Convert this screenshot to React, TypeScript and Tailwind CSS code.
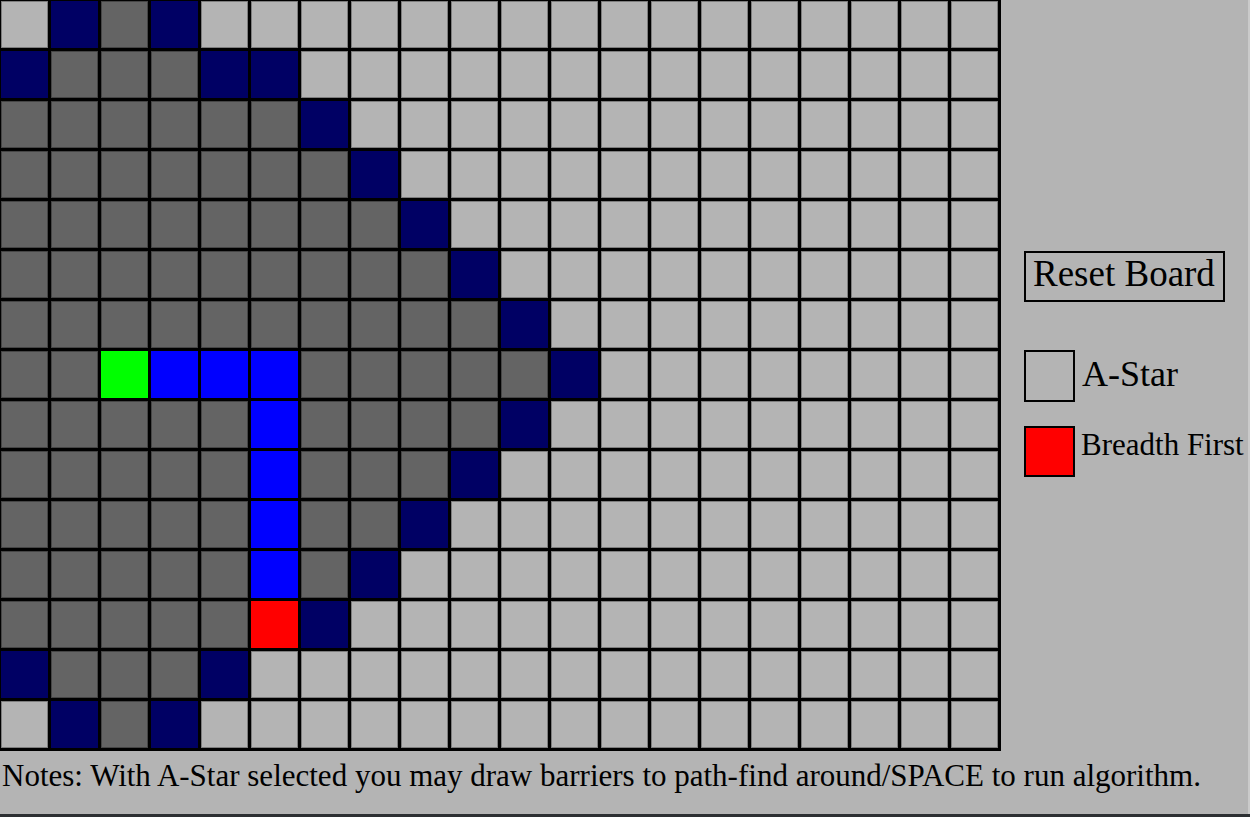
import React from 'react';

// L = unvisited, D = visited, N = frontier, B = path, G = start, R = end
const rows = [
  'LNDNLLLLLLLLLLLLLLLL',
  'NDDDNNLLLLLLLLLLLLLL',
  'DDDDDDNLLLLLLLLLLLLL',
  'DDDDDDDNLLLLLLLLLLLL',
  'DDDDDDDDNLLLLLLLLLLL',
  'DDDDDDDDDNLLLLLLLLLL',
  'DDDDDDDDDDNLLLLLLLLL',
  'DDGBBBDDDDDNLLLLLLLL',
  'DDDDDBDDDDNLLLLLLLLL',
  'DDDDDBDDDNLLLLLLLLLL',
  'DDDDDBDDNLLLLLLLLLLL',
  'DDDDDBDNLLLLLLLLLLLL',
  'DDDDDRNLLLLLLLLLLLLL',
  'NDDDNLLLLLLLLLLLLLLL',
  'LNDNLLLLLLLLLLLLLLLL',
];

const cellClass: Record<string, string> = {
  L: 'bg-[#b4b4b4] border border-black/30',
  D: 'bg-[#646464] border border-black/30',
  N: 'bg-[#000064]',
  B: 'bg-[#0000ff]',
  G: 'bg-[#00ff00]',
  R: 'bg-[#ff0000]',
};

const Board: React.FC = () => (
  <div className="grid grid-cols-[repeat(20,47px)] auto-rows-[47px] gap-[3px] bg-black p-px pr-[3px] pb-[3px] w-[1001px] h-[751px]">
    {rows.flatMap((row, r) =>
      row.split('').map((c, i) => <div key={`${r}-${i}`} className={cellClass[c]} />)
    )}
  </div>
);

const App: React.FC = () => {
  return (
    <div
      className="w-[1250px] h-[817px] bg-[#b4b4b4] overflow-hidden flex flex-col text-black"
      style={{ fontFamily: '"Liberation Serif", "Times New Roman", serif' }}
    >
      <div className="flex-1 flex flex-col border-r-2 border-[#cacaca]">
        <div className="flex">
          <Board />

          {/* Side controls */}
          <div className="flex flex-col pl-[23px] pt-[251px]">
            <button className="w-[201px] h-[51px] border-2 border-black flex items-center pl-[7px] text-[37px] leading-none">
              <span className="-mt-[7px]">Reset Board</span>
            </button>
            <div className="flex items-center gap-[7px] mt-[48px]">
              <div className="w-[51px] h-[52px] border-2 border-black bg-[#b4b4b4]" />
              <span className="text-[36px] leading-none -mt-[4px]">A-Star</span>
            </div>
            <div className="flex items-center gap-[6px] mt-[24px]">
              <div className="w-[51px] h-[51px] border-2 border-black bg-[#ff0000]" />
              <span className="text-[31px] leading-none -mt-[14px] whitespace-nowrap">Breadth First</span>
            </div>
          </div>
        </div>

        <p className="pl-[2px] mt-[9px] text-[31px] leading-[31px] whitespace-nowrap">
          Notes: With A-Star selected you may draw barriers to path-find around/SPACE to run algorithm.
        </p>
      </div>
      <div className="h-[3px] bg-[#2c2f32]" />
    </div>
  );
};

export default App;
